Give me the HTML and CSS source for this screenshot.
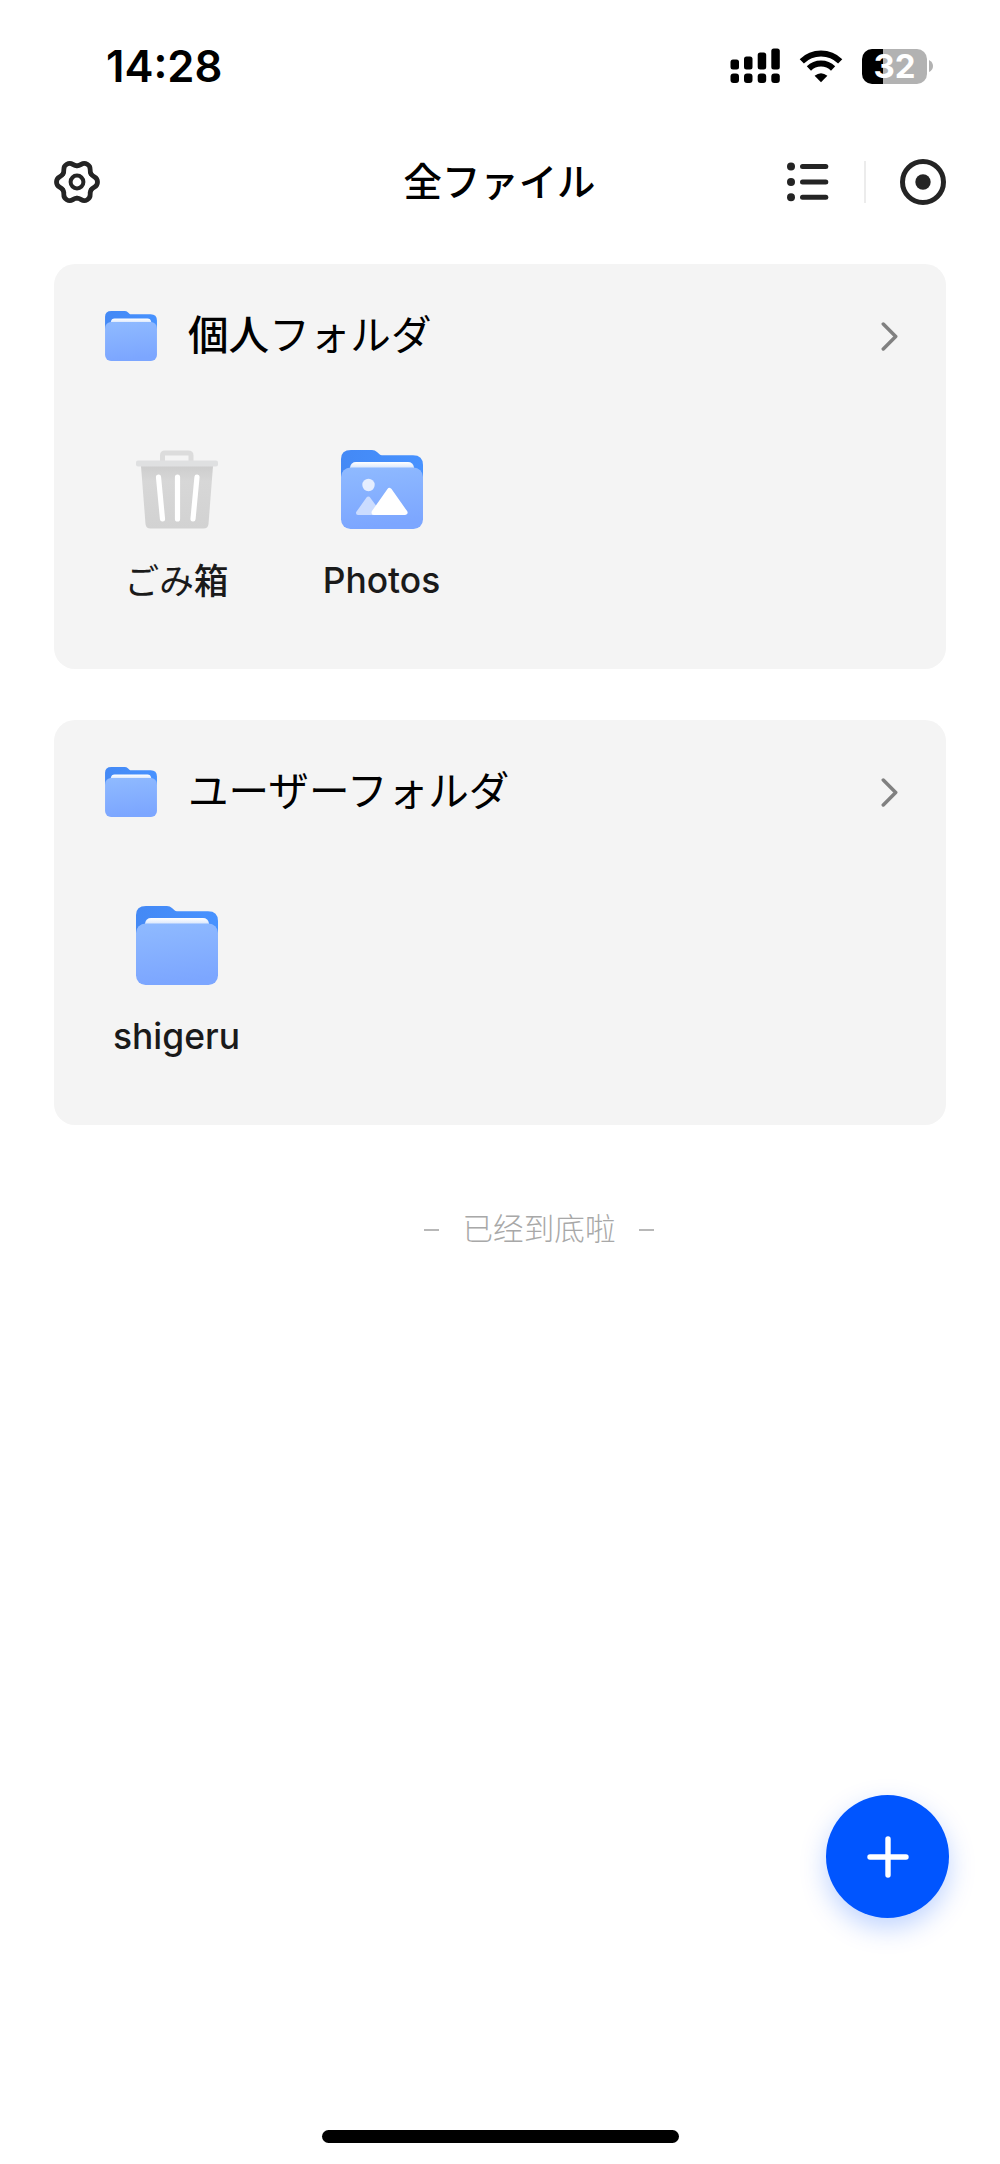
FILE: index.html
```html
<!DOCTYPE html>
<html lang="ja">
<head>
<meta charset="utf-8">
<title>全ファイル</title>
<link rel="stylesheet" href="styles.css">
</head>
<body>
<svg class="defs" width="0" height="0" aria-hidden="true">
  <defs>
    <linearGradient id="front" x1="0" y1="0" x2="0.15" y2="1"><stop offset="0" stop-color="#8fbaff"/><stop offset="1" stop-color="#7ca6ff"/></linearGradient>
    <linearGradient id="back" x1="0" y1="0" x2="1" y2="0"><stop offset="0" stop-color="#4489f5"/><stop offset="1" stop-color="#4792ff"/></linearGradient>
    <linearGradient id="sheet" x1="0" y1="0" x2="0" y2="1"><stop offset="0" stop-color="#fff"/><stop offset="1" stop-color="#d3e2fb"/></linearGradient>
    <linearGradient id="bin" x1="0" y1="0" x2="0" y2="1"><stop offset="0" stop-color="#cdcdcd"/><stop offset=".25" stop-color="#d7d7d7"/><stop offset="1" stop-color="#d2d2d2"/></linearGradient>
    <symbol id="folder" viewBox="0 0 82 79">
      <path fill="url(#back)" d="M0 28V9Q0 0 10 0H31Q34 0 36 2L38.500 4.300Q39.500 5.200 41 5.200H72Q82 5.200 82 15V28Z"/>
      <path fill="url(#sheet)" d="M9 19V17.500Q10 12 15 12H67Q72 12 73 17.500V19Z"/>
      <rect fill="url(#front)" y="17.500" width="82" height="61.500" rx="9.500"/>
    </symbol>
    <symbol id="chevron" viewBox="0 0 16 28"><path d="M2 2 14 14 2 26" fill="none" stroke="#808080" stroke-width="3.400" stroke-linecap="round" stroke-linejoin="round"/></symbol>
    <path id="tooth" d="M0-16.200C4.700-16.200 5.050-20.750 10.250-17.750S11.680-12.170 14.030-8.100"/>
  </defs>
</svg>
<div class="screen">
  <header class="status">
    <time class="clock">14:28</time>
    <svg class="signal" viewBox="0 0 50 36" width="50" height="36">
      <rect x=".5" y="11.500" width="8.500" height="10" rx="2.500"/><rect x="14" y="8.500" width="8.500" height="13" rx="2.500"/><rect x="27.700" y="4.500" width="8.500" height="17" rx="2.500"/><rect x="41.300" y=".5" width="8.500" height="21" rx="2.500"/>
      <rect x=".5" y="25.500" width="8.500" height="9.500" rx="3"/><rect x="14" y="25.500" width="8.500" height="9.500" rx="3"/><rect x="27.700" y="25.500" width="8.500" height="9.500" rx="3"/><rect x="41.300" y="25.500" width="8.500" height="9.500" rx="3"/>
    </svg>
    <svg class="wifi" viewBox="0 0 44 34" width="44" height="34">
      <g fill="none" stroke="#000" stroke-width="6"><path d="M2.800 12.300A27.500 27.500 0 0 1 41.200 12.300"/><path d="M9.900 19.500A17.200 17.200 0 0 1 34.100 19.500"/></g>
      <path d="M22 33.300 15.600 26.800Q22 21.500 28.400 26.800Z"/>
    </svg>
    <div class="battery"><div class="level">32</div><svg viewBox="0 0 4 12" width="4" height="12"><path d="M0 0Q4 2 4 6T0 12Z" fill="#b2b2b2"/></svg></div>
  </header>

  <nav class="toolbar">
    <svg class="gear" viewBox="-24 -24 48 48" width="48" height="48">
      <g fill="none" stroke="#242424" stroke-width="4.800" stroke-linecap="round">
        <use href="#tooth"/><use href="#tooth" transform="rotate(60)"/><use href="#tooth" transform="rotate(120)"/><use href="#tooth" transform="rotate(180)"/><use href="#tooth" transform="rotate(240)"/><use href="#tooth" transform="rotate(300)"/>
        <circle r="6.400" stroke-width="4"/>
      </g>
    </svg>
    <h1 class="title">全ファイル</h1>
    <div class="actions">
      <svg viewBox="0 0 42 40" width="42" height="40" fill="#242424">
        <circle cx="4" cy="4.500" r="4"/><circle cx="4" cy="20" r="4"/><circle cx="4" cy="35.300" r="4"/>
        <rect x="13" y="2" width="28.300" height="5" rx="2.500"/><rect x="13" y="17.500" width="28.300" height="5" rx="2.500"/><rect x="13" y="32.800" width="28.300" height="5" rx="2.500"/>
      </svg>
      <span class="divider"></span>
      <svg viewBox="0 0 46 46" width="46" height="46"><circle cx="23" cy="23" r="20.500" fill="none" stroke="#242424" stroke-width="5"/><circle cx="23" cy="23" r="7.700" fill="#242424"/></svg>
    </div>
  </nav>

  <main class="sections">
    <section class="card">
      <div class="card-head">
        <svg class="folder-small"><use href="#folder"/></svg>
        <h2 class="heading"><span class="kanji">個人</span>フォルダ</h2>
        <svg class="chevron"><use href="#chevron"/></svg>
      </div>
      <div class="items">
        <div class="item">
          <svg class="thumb" viewBox="0 0 82 79">
            <path d="M26.500 12V5.500Q26.500 3 29 3H52Q55 3 55 5.500V12" fill="none" stroke="#dcdcdc" stroke-width="5"/>
            <path d="M5 16H77L72.500 74Q72 78.500 67.500 78.500H14.500Q10 78.500 9.500 74Z" fill="url(#bin)"/>
            <rect y="10.500" width="82" height="6" rx="2" fill="#dfe0e1"/>
            <path d="M22.500 27 26.500 69M41.500 27V69M61 27 57 69" stroke="#fff" stroke-width="5.200" stroke-linecap="round"/>
          </svg>
          <span class="label jp">ごみ<span class="kanji">箱</span></span>
        </div>
        <div class="item">
          <svg class="thumb" viewBox="0 0 82 79">
            <use href="#folder" width="82" height="79"/>
            <circle cx="27.500" cy="35" r="6.200" fill="#e5eeff"/>
            <path d="M17 63 27.300 48.500 38 63Z" fill="#cbdcff" stroke="#cbdcff" stroke-width="4" stroke-linejoin="round"/>
            <path d="M33 62.500 48.500 40.500 64 62.500Z" fill="#fff" stroke="#fff" stroke-width="5" stroke-linejoin="round"/>
          </svg>
          <span class="label">Photos</span>
        </div>
      </div>
    </section>
    <section class="card">
      <div class="card-head">
        <svg class="folder-small"><use href="#folder"/></svg>
        <h2 class="heading">ユーザーフォルダ</h2>
        <svg class="chevron"><use href="#chevron"/></svg>
      </div>
      <div class="items">
        <div class="item">
          <svg class="thumb"><use href="#folder"/></svg>
          <span class="label">shigeru</span>
        </div>
      </div>
    </section>
  </main>

  <p class="end" lang="zh"><span class="dash"></span><span>已经到底啦</span><span class="dash"></span></p>

  <div class="bottom">
    <button class="add" aria-label="追加"><svg viewBox="0 0 42 42" width="42" height="42"><path d="M21 3V39M3 21H39" stroke="#fff" stroke-width="5.400" stroke-linecap="round"/></svg></button>
    <div class="home"></div>
  </div>
</div>
</body>
</html>
```
FILE: styles.css
```css
* { box-sizing: border-box; }
body { margin: 0; background: #fff; color: #000; font-family: Inter, "Noto Sans CJK JP", sans-serif; }
svg { display: block; flex: none; }
h1, h2, p { margin: 0; }
.defs { position: absolute; }
.screen { width: 1000px; height: 2164px; display: flex; flex-direction: column; overflow: hidden; }

.status { height: 132px; padding: 0 67px 0 106px; display: flex; align-items: center; }
.clock { font-size: 43.600px; font-weight: 600; line-height: 52px; margin-right: auto; padding-top: 2px; }
.wifi { margin: 0 19px 0 19px; }
.battery { display: flex; align-items: center; gap: 2px; }
.level { width: 65px; height: 35px; border-radius: 10px; background: linear-gradient(90deg, #000 21px, #b2b2b2 21px); color: #fff; font-size: 33px; font-weight: 700; line-height: 35px; text-align: center; }

.toolbar { height: 100px; padding: 0 54px 0 53px; display: grid; grid-template-columns: 1fr auto 1fr; align-items: center; }
.title { font-size: 38.400px; font-weight: 500; line-height: 56px; }
.actions { display: flex; align-items: center; justify-content: flex-end; }
.divider { width: 2px; height: 42px; margin: 0 34px 0 35px; background: #ececec; }

.sections { padding: 32px 54px 0; display: flex; flex-direction: column; gap: 51px; }
.card { height: 405px; border-radius: 21px; background: #f4f4f4; }
.card-head { display: flex; align-items: center; height: 144px; padding: 0 48px 0 51px; }
.folder-small { width: 52px; height: 50px; }
.heading { margin-left: 31px; font-size: 40.600px; font-weight: 400; line-height: 60px; flex: 1; }
.kanji { font-weight: 500; }
.chevron { width: 17px; height: 29px; }
.items { display: flex; padding: 42px 20px 0; }
.item { width: 205px; display: flex; flex-direction: column; align-items: center; }
.thumb { width: 82px; height: 79px; }
.label { margin-top: 29px; font-size: 35.400px; font-weight: 500; line-height: 46px; color: #1a1a1a; }
.label.jp { font-size: 34.700px; font-weight: 400; }

.end { margin: 80px 0 0 78px; display: flex; justify-content: center; align-items: center; gap: 24px; font: 300 30.600px/44px "Noto Sans CJK SC", sans-serif; color: #a8a8a8; }
.dash { width: 15px; height: 2px; margin-top: 5px; background: #b8b8b8; }

.bottom { margin-top: auto; display: flex; flex-direction: column; }
.add { width: 123px; height: 123px; margin: 0 51px 212px auto; padding: 0; border: 0; border-radius: 50%; background: #05f; display: flex; align-items: center; justify-content: center; box-shadow: 0 10px 26px rgba(0, 85, 255, .25); }
.home { width: 357px; height: 13px; margin: 0 auto 21px; border-radius: 7px; background: #000; }
```
